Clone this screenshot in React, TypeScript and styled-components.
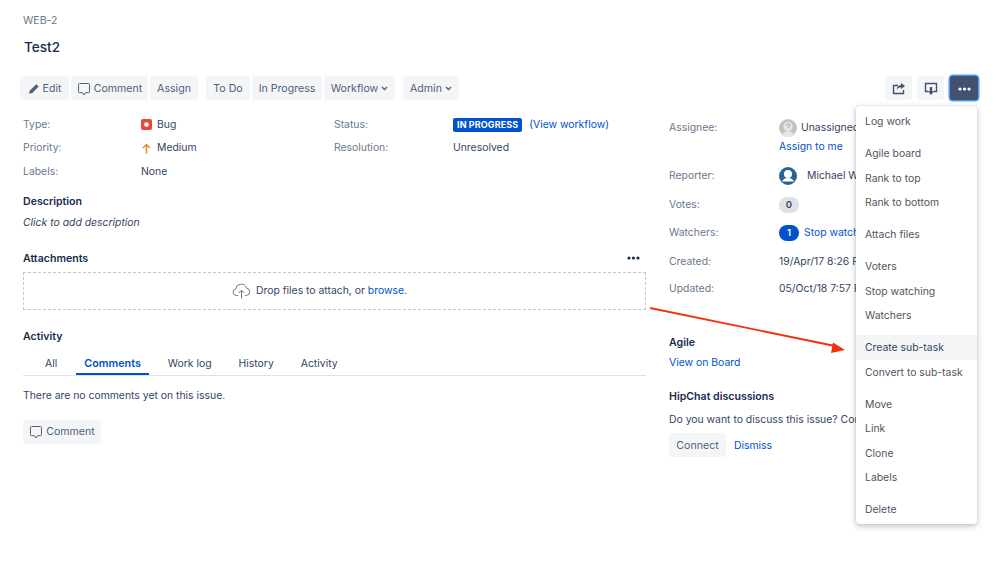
import React, { FunctionComponent } from "react";
import styled, { createGlobalStyle } from "styled-components";

const GlobalStyle = createGlobalStyle`
  html, body {
    margin: 0;
    padding: 0;
    background: #fff;
  }
  body {
    font-family: Inter, "Liberation Sans", sans-serif;
    font-size: 10.4px;
    line-height: 16px;
    color: #344563;
  }
`;

const Page = styled.div`
  position: relative;
  width: 999px;
  height: 566px;
  overflow: hidden;
  box-sizing: border-box;
  padding: 13px 21px 0 23px;
`;

const IssueKey = styled.div`
  color: #6b778c;
  font-size: 10.5px;
`;

const Title = styled.h1`
  margin: 8px 0 0;
  padding-left: 1px;
  font-size: 13.6px;
  line-height: 20px;
  font-weight: 500;
  color: #172b4d;
`;

const Toolbar = styled.div`
  display: flex;
  align-items: flex-start;
  margin: 19px 0 0 -3px;
`;

const ButtonGroup = styled.div`
  display: flex;
  gap: 2px;
  margin-right: 8px;
`;

const RightGroup = styled.div`
  position: relative;
  display: flex;
  gap: 5px;
  margin-left: auto;
`;

const Button = styled.div<{ $width?: number }>`
  display: flex;
  align-items: center;
  justify-content: center;
  gap: 3px;
  box-sizing: border-box;
  height: 24px;
  padding-top: 1px;
  ${(p) => (p.$width ? `width: ${p.$width}px;` : "")}
  background: #f4f5f7;
  border-radius: 3px;
  color: #505f79;
  font-size: 10.6px;
  white-space: nowrap;
`;

const MoreButton = styled(Button)`
  background: #42526e;
  box-shadow: 0 0 0 1.5px #4c9aff;
  margin-left: 1px;
`;

const Columns = styled.div`
  display: grid;
  grid-template-columns: 623px 187px;
  column-gap: 23px;
  margin-top: 13px;
`;

const DetailGrid = styled.div`
  display: grid;
  grid-template-columns: 118px 193px 119px 1fr;
  grid-auto-rows: 23.6px;
  align-items: center;
`;

const Label = styled.div`
  color: #6b778c;
`;

const Value = styled.div<{ $gap?: number }>`
  display: flex;
  align-items: center;
  gap: ${(p) => p.$gap ?? 5}px;
  min-width: 0;
  overflow: hidden;
  white-space: nowrap;
`;

const Badge = styled.span`
  background: #0052cc;
  color: #fff;
  font-size: 9px;
  font-weight: 700;
  line-height: 14px;
  padding: 0 4px;
  border-radius: 2px;
  letter-spacing: 0.1px;
`;

const Link = styled.a`
  color: #0052cc;
  white-space: nowrap;
`;

const WorkflowLink = styled(Link)`
  margin-left: 2px;
`;

const DismissLink = styled(Link)`
  margin-top: 2px;
`;

const Heading = styled.h2<{ $top: number }>`
  margin: ${(p) => p.$top}px 0 0;
  font-size: 10.6px;
  line-height: 16px;
  font-weight: 600;
  color: #172b4d;
`;

const Italic = styled.div`
  margin-top: 5px;
  font-style: italic;
`;

const AttachmentHead = styled.div`
  display: flex;
  align-items: flex-end;
  justify-content: space-between;
  padding-right: 6px;
  svg {
    margin-bottom: 7px;
  }
`;

const DropZone = styled.div`
  display: flex;
  align-items: center;
  justify-content: center;
  gap: 5px;
  height: 38px;
  margin-top: 5px;
  padding-right: 30px;
  box-sizing: border-box;
  border: 1px dashed #c1c7d0;
`;

const Tabs = styled.div`
  display: flex;
  gap: 11px;
  margin-top: 6px;
  padding-left: 14px;
  border-bottom: 1px solid #dfe1e6;
  height: 25px;
  box-sizing: border-box;
`;

const Tab = styled.div<{ $active?: boolean }>`
  padding: 0 8px;
  height: 24px;
  box-sizing: border-box;
  line-height: 26px;
  font-size: ${(p) => (p.$active ? 10.8 : 10.4)}px;
  color: ${(p) => (p.$active ? "#0052cc" : "#344563")};
  font-weight: ${(p) => (p.$active ? 600 : 400)};
  border-bottom: 2px solid ${(p) => (p.$active ? "#0052cc" : "transparent")};
`;

const Empty = styled.div`
  margin-top: 12px;
`;

const CommentRow = styled.div`
  display: flex;
  margin-top: 16px;
`;

const SideCol = styled.div`
  display: flex;
  flex-direction: column;
  margin-top: 6px;
  white-space: nowrap;
  min-width: 0;
`;

const PersonRow = styled.div<{ $top: number }>`
  display: grid;
  grid-template-columns: 110px minmax(0, 1fr);
  align-items: center;
  margin-top: ${(p) => p.$top}px;
  min-height: 16px;
`;

const SubLink = styled.div`
  margin: 2px 0 0 110px;
`;

const Avatar = styled.svg`
  width: 18px;
  height: 18px;
  flex: none;
`;

const Count = styled.span<{ $on?: boolean }>`
  display: inline-flex;
  align-items: center;
  justify-content: center;
  flex: none;
  width: 20px;
  height: 16px;
  border-radius: 8px;
  font-size: 9.5px;
  font-weight: 600;
  background: ${(p) => (p.$on ? "#0052cc" : "#dfe1e6")};
  color: ${(p) => (p.$on ? "#fff" : "#344563")};
`;

const SideText = styled.div<{ $top: number }>`
  margin-top: ${(p) => p.$top}px;
  overflow: hidden;
`;

const SideActions = styled.div`
  display: flex;
  align-items: center;
  gap: 8px;
  margin-top: 5px;
`;

const Menu = styled.div`
  position: absolute;
  top: 30px;
  right: 1px;
  z-index: 2;
  width: 121px;
  box-sizing: border-box;
  padding: 3px 0;
  background: #fff;
  border-radius: 3px;
  box-shadow: 0 2px 6px rgba(9, 30, 66, 0.28), 0 0 1px rgba(9, 30, 66, 0.3);
`;

const MenuGroup = styled.div`
  & + & {
    margin-top: 8px;
  }
`;

const MenuItem = styled.div<{ $active?: boolean }>`
  height: 24.3px;
  line-height: 26px;
  padding-left: 9px;
  white-space: nowrap;
  color: ${(p) => (p.$active ? "#344563" : "#4f5560")};
  background: ${(p) => (p.$active ? "#f4f5f7" : "transparent")};
`;

const ArrowLayer = styled.svg`
  position: absolute;
  left: 645px;
  top: 300px;
  z-index: 3;
  width: 210px;
  height: 60px;
  pointer-events: none;
`;

const CommentIcon: FunctionComponent = () => (
  <svg width="14" height="14" viewBox="0 0 14 14" fill="none">
    <path
      d="M2.5 1.5h9a1 1 0 0 1 1 1v7.2a1 1 0 0 1-1 1H8.6L6.9 13l-1.3-2.3H2.5a1 1 0 0 1-1-1V2.5a1 1 0 0 1 1-1z"
      stroke="#505f79"
      strokeWidth="1"
    />
  </svg>
);

const Dots: FunctionComponent<{ color: string }> = ({ color }) => (
  <svg width="13" height="4" viewBox="0 0 13 4">
    <circle cx="2" cy="2" r="1.6" fill={color} />
    <circle cx="6.5" cy="2" r="1.6" fill={color} />
    <circle cx="11" cy="2" r="1.6" fill={color} />
  </svg>
);

const Chevron: FunctionComponent = () => (
  <svg width="7" height="5" viewBox="0 0 7 5" fill="none">
    <path d="M1 1l2.5 2.5L6 1" stroke="#505f79" strokeWidth="1.3" />
  </svg>
);

const menuGroups: { label: string; active?: boolean }[][] = [
  [{ label: "Log work" }],
  [{ label: "Agile board" }, { label: "Rank to top" }, { label: "Rank to bottom" }],
  [{ label: "Attach files" }],
  [{ label: "Voters" }, { label: "Stop watching" }, { label: "Watchers" }],
  [{ label: "Create sub-task", active: true }, { label: "Convert to sub-task" }],
  [{ label: "Move" }, { label: "Link" }, { label: "Clone" }, { label: "Labels" }],
  [{ label: "Delete" }],
];

export default function App() {
  return (
    <Page>
      <GlobalStyle />
      <IssueKey>WEB-2</IssueKey>
      <Title>Test2</Title>

      <Toolbar>
        <ButtonGroup>
          <Button $width={49}>
            <svg width="12" height="12" viewBox="0 0 12 12">
              <path d="M8.3 1.200l2.400 2.400-6.400 6.400-3.200.8.800-3.200z" fill="#505f79" />
            </svg>
            Edit
          </Button>
          <Button $width={77}>
            <CommentIcon />
            Comment
          </Button>
          <Button $width={48}>Assign</Button>
        </ButtonGroup>
        <ButtonGroup>
          <Button $width={44}>To Do</Button>
          <Button $width={70}>In Progress</Button>
          <Button $width={71}>
            Workflow
            <Chevron />
          </Button>
        </ButtonGroup>
        <ButtonGroup>
          <Button $width={56}>
            Admin
            <Chevron />
          </Button>
        </ButtonGroup>
        <RightGroup>
          <Button $width={27}>
            <svg width="14" height="14" viewBox="0 0 14 14" fill="none">
              <path d="M11.5 8v3.500h-10v-8H6" stroke="#42526e" strokeWidth="1.4" />
              <path d="M9 1l4 3-4 3V5.300C6.800 5.300 5.500 6.300 4.700 8c0-3 1.600-4.700 4.300-4.900z" fill="#42526e" />
            </svg>
          </Button>
          <Button $width={27}>
            <svg width="14" height="14" viewBox="0 0 14 14" fill="none">
              <path d="M4.5 9.500H1.500v-8h11v8h-3" stroke="#42526e" strokeWidth="1.4" />
              <path d="M5.8 5h2.400v4.200H10L7 13 4 9.200h1.800z" fill="#42526e" />
            </svg>
          </Button>
          <MoreButton $width={28}>
            <Dots color="#fff" />
          </MoreButton>
          <Menu>
            {menuGroups.map((group) => (
              <MenuGroup key={group[0].label}>
                {group.map((item) => (
                  <MenuItem key={item.label} $active={item.active}>
                    {item.label}
                  </MenuItem>
                ))}
              </MenuGroup>
            ))}
          </Menu>
        </RightGroup>
      </Toolbar>

      <Columns>
        <div>
          <DetailGrid>
            <Label>Type:</Label>
            <Value>
              <svg width="11" height="11" viewBox="0 0 11 11">
                <rect width="11" height="11" rx="2" fill="#e5493a" />
                <circle cx="5.5" cy="5.5" r="2.3" fill="#fff" />
              </svg>
              Bug
            </Value>
            <Label>Status:</Label>
            <Value>
              <Badge>IN PROGRESS</Badge>
              <WorkflowLink>(View workflow)</WorkflowLink>
            </Value>
            <Label>Priority:</Label>
            <Value>
              <svg width="11" height="11" viewBox="0 0 11 11" fill="none">
                <path d="M5.5 10.500V1.500M2 5l3.500-3.500L9 5" stroke="#f18b2d" strokeWidth="1.5" />
              </svg>
              Medium
            </Value>
            <Label>Resolution:</Label>
            <Value>Unresolved</Value>
            <Label>Labels:</Label>
            <Value>None</Value>
          </DetailGrid>

          <Heading $top={10}>Description</Heading>
          <Italic>Click to add description</Italic>

          <AttachmentHead>
            <Heading $top={20}>Attachments</Heading>
            <Dots color="#172b4d" />
          </AttachmentHead>
          <DropZone>
            <svg width="19" height="16" viewBox="0 0 19 16" fill="none" stroke="#6b778c" strokeWidth="1">
              <path d="M6 12.500H4.300a3.300 3.300 0 0 1-.6-6.500 5.500 5.500 0 0 1 10.700-1 3.800 3.800 0 0 1 .2 7.500H13" />
              <path d="M9.5 15.500V7.500M6.800 10l2.700-2.700L12.200 10" />
            </svg>
            <span>
              Drop files to attach, or <Link>browse.</Link>
            </span>
          </DropZone>

          <Heading $top={19}>Activity</Heading>
          <Tabs>
            <Tab>All</Tab>
            <Tab $active>Comments</Tab>
            <Tab>Work log</Tab>
            <Tab>History</Tab>
            <Tab>Activity</Tab>
          </Tabs>
          <Empty>There are no comments yet on this issue.</Empty>
          <CommentRow>
            <Button $width={78}>
              <CommentIcon />
              Comment
            </Button>
          </CommentRow>
        </div>

        <SideCol>
          <PersonRow $top={0}>
            <Label>Assignee:</Label>
            <Value $gap={4}>
              <Avatar viewBox="0 0 18 18">
                <circle cx="9" cy="9" r="9" fill="#c4c4c4" />
                <path d="M3.5 16c.8-3 3-4 5.500-4s4.700 1 5.500 4a9 9 0 0 1-11 0z" fill="#e6e6e6" />
                <circle cx="9" cy="7.5" r="4.5" fill="#e6e6e6" />
                <path d="M7.5 6.500a1.500 1.500 0 1 1 2.200 1.300c-.5.300-.7.500-.7 1.200" stroke="#a0a0a0" fill="none" />
              </Avatar>
              Unassigned
            </Value>
          </PersonRow>
          <SubLink>
            <Link>Assign to me</Link>
          </SubLink>
          <PersonRow $top={12}>
            <Label>Reporter:</Label>
            <Value $gap={10}>
              <Avatar viewBox="0 0 18 18">
                <circle cx="9" cy="9" r="9" fill="#2a6496" />
                <circle cx="9" cy="7" r="4" fill="#fff" />
                <path d="M3 14.500c1-2.500 3.300-3.500 6-3.500s5 1 6 3.500z" fill="#fff" />
              </Avatar>
              Michael W
            </Value>
          </PersonRow>
          <PersonRow $top={12}>
            <Label>Votes:</Label>
            <Value>
              <Count>0</Count>
            </Value>
          </PersonRow>
          <PersonRow $top={12}>
            <Label>Watchers:</Label>
            <Value>
              <Count $on>1</Count>
              <Link>Stop watching</Link>
            </Value>
          </PersonRow>
          <PersonRow $top={13}>
            <Label>Created:</Label>
            <Value>19/Apr/17 8:26 PM</Value>
          </PersonRow>
          <PersonRow $top={11}>
            <Label>Updated:</Label>
            <Value>05/Oct/18 7:57 PM</Value>
          </PersonRow>

          <Heading $top={38}>Agile</Heading>
          <SideText $top={4}>
            <Link>View on Board</Link>
          </SideText>
          <Heading $top={18}>HipChat discussions</Heading>
          <SideText $top={7}>Do you want to discuss this issue? Connect</SideText>
          <SideActions>
            <Button $width={57}>Connect</Button>
            <DismissLink>Dismiss</DismissLink>
          </SideActions>
        </SideCol>
      </Columns>

      <ArrowLayer viewBox="0 0 210 60">
        <path d="M5 8L190 46" stroke="#f5300d" strokeWidth="1.8" />
        <path d="M200 50L188 42.500l-2 10.500z" fill="#f5300d" />
      </ArrowLayer>
    </Page>
  );
}
